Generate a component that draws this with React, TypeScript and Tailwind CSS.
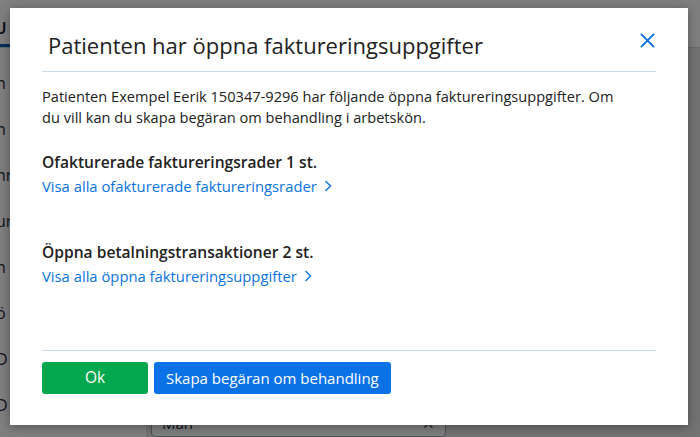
import React from "react";

const sideItems = ["n *", "n *", "nn", "ur", "n", "ö", "D", "D"];

export default function App() {
  return (
    <div
      className="relative w-[700px] h-[437px] overflow-hidden bg-white"
      style={{ fontFamily: '"Open Sans", "Noto Sans", sans-serif' }}
    >
      {/* underlying page */}
      <div className="flex flex-col h-full">
        <div className="h-[48px] flex items-end border-b border-gray-300">
          <div className="ml-[-6px] pb-[4px] text-[17px] font-semibold text-gray-900 border-b-[3px] border-[#0b5cb8] w-[16px]">
            U
          </div>
        </div>
        <div className="flex flex-1">
          <div className="w-[150px] flex flex-col pt-[24px] gap-[24px] text-[16px] text-gray-800 ml-[-4px]">
            {sideItems.map((t, i) => (
              <div key={i} className="h-[22px] leading-[22px]">
                {t}
              </div>
            ))}
          </div>
          <div className="flex-1 flex flex-col justify-end bg-[#e6e6e6]">
            <div className="ml-[5px] w-[295px] h-[28px] border border-gray-400 rounded bg-white flex items-start justify-between px-[10px] pt-[2px] text-[15px] text-gray-800">
              <span>Man</span>
              <span className="text-gray-600">✕</span>
            </div>
          </div>
        </div>
      </div>

      {/* backdrop */}
      <div className="absolute inset-0 bg-[#000]/50" />

      {/* modal */}
      <div className="absolute left-[10px] top-[8px] w-[678px] h-[417px] bg-white shadow-[0_2px_10px_rgba(0,0,0,0.35)] flex flex-col px-[32px]">
        <div className="flex items-center justify-between h-[64px] pt-[10px] border-b border-[#cbdbe8] pl-[6px]">
          <h1 className="text-[22px] font-normal text-[#222] leading-none">
            Patienten har öppna faktureringsuppgifter
          </h1>
          <svg
            width="15"
            height="15"
            viewBox="0 0 16 16"
            className="mr-[1px] mb-[8px]"
            fill="none"
            stroke="#0b6fdf"
            strokeWidth="2"
          >
            <path d="M1 1 L15 15 M15 1 L1 15" />
          </svg>
        </div>

        <div className="flex-1 pt-[14px] text-[#222]">
          <p className="text-[14.6px] leading-[21px] pr-[30px]">
            Patienten Exempel Eerik 150347-9296 har följande öppna faktureringsuppgifter. Om du vill kan du skapa begäran om behandling i arbetskön.
          </p>

          <div className="mt-[22px]">
            <div className="text-[15.6px] font-semibold leading-[24px]">
              Ofakturerade faktureringsrader 1 st.
            </div>
            <a className="text-[14.8px] leading-[24px] text-[#0b73e0] flex items-center gap-[7px]">
              Visa alla ofakturerade faktureringsrader
              <svg width="8" height="12" viewBox="0 0 8 12" fill="none" stroke="#0b73e0" strokeWidth="1.4">
                <path d="M1.5 1 L6.5 6 L1.5 11" />
              </svg>
            </a>
          </div>

          <div className="mt-[42px]">
            <div className="text-[15.6px] font-semibold leading-[24px]">
              Öppna betalningstransaktioner 2 st.
            </div>
            <a className="text-[14.8px] leading-[24px] text-[#0b73e0] flex items-center gap-[7px]">
              Visa alla öppna faktureringsuppgifter
              <svg width="8" height="12" viewBox="0 0 8 12" fill="none" stroke="#0b73e0" strokeWidth="1.4">
                <path d="M1.5 1 L6.5 6 L1.5 11" />
              </svg>
            </a>
          </div>
        </div>

        <div className="border-t border-[#cbdbe8] h-[75px] pt-[11px] flex items-start gap-[6px]">
          <button className="w-[106px] h-[32px] rounded-[3px] bg-[#03a84e] text-white text-[15.5px]">
            Ok
          </button>
          <button className="px-[12px] h-[32px] rounded-[3px] bg-[#0a72e6] text-white text-[15px]">
            Skapa begäran om behandling
          </button>
        </div>
      </div>
    </div>
  );
}
